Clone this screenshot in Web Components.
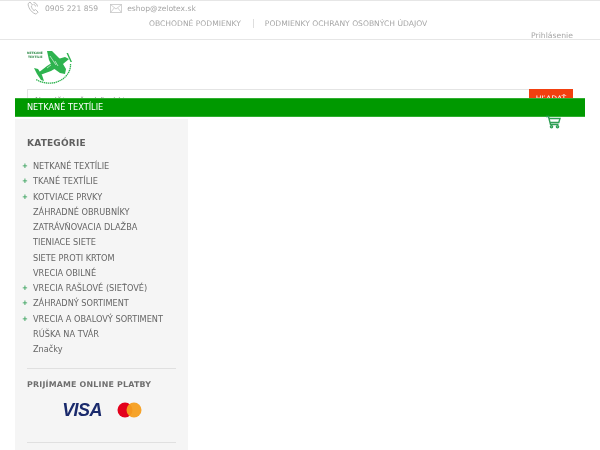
<!DOCTYPE html>
<html lang="sk">
<head>
<meta charset="utf-8">
<title>Zelotex</title>
<style>
  html, body { margin: 0; padding: 0; background: #fff; height: 450px; overflow: hidden; }
  body { font-family: "DejaVu Sans", sans-serif; filter: blur(.35px); }
</style>
</head>
<body>
<top-bar></top-bar>
<site-header></site-header>
<green-nav>NETKANÉ TEXTÍLIE</green-nav>
<page-main>
  <side-panel>
    <cat-menu></cat-menu>
    <pay-box></pay-box>
  </side-panel>
</page-main>

<script>
class TopBar extends HTMLElement {
  constructor() {
    super();
    this.attachShadow({ mode: "open" });
    this.shadowRoot.innerHTML = `
      <style>
        :host {
          display: block;
          box-sizing: content-box;
          height: 38px;
          border-top: 1px solid #e6e6e6;
          border-bottom: 1px solid #e6e6e6;
          color: #a6a6a6;
          font-size: 7.6px;
        }
        .contact {
          display: flex;
          align-items: center;
          height: 14px;
          padding-left: 27px;
        }
        .contact svg { display: block; flex: none; }
        .contact .txt { margin-left: 6px; }
        .contact .mail { margin-left: 12px; }
        .contact .mail + .txt { margin-left: 5px; }
        .links {
          display: flex;
          align-items: center;
          margin: 1px 0 0 149px;
          height: 14px;
        }
        .sep { width: 1px; height: 9px; background: #dedede; margin: 0 11px 0 12px; }
        .login { text-align: right; padding: 1px 27px 0 0; font-size: 7.7px; line-height: 10px; }
      </style>
      <div class="contact">
        <svg width="12" height="14" viewBox="0 0 12 14" fill="none" stroke="#b5b5b5" stroke-width=".9">
          <path d="M3 1 1.2 2.6C.8 5.6 3.6 11 8.3 12.9c.8.2 2-.6 2.8-1.8L8.6 8.6 7 9.6C5.6 8.6 4.6 6.8 4.3 5.2L5.5 4Z"/>
          <path d="M6.5 1.5c2.2.2 3.8 1.8 4 4M6.5 3.4c1.1.1 2 1 2.1 2.1"/>
        </svg>
        <span class="txt">0905 221 859</span>
        <svg class="mail" width="12" height="9" viewBox="0 0 12 9" fill="none" stroke="#c6c6c6" stroke-width=".8">
          <rect x=".5" y=".5" width="11" height="8"/>
          <path d="M.5.5 6 5l5.5-4.5M.5 8.5 4.4 3.8M11.5 8.5 7.6 3.8"/>
        </svg>
        <span class="txt">eshop@zelotex.sk</span>
      </div>
      <div class="links">
        <span>OBCHODNÉ PODMIENKY</span><span class="sep"></span><span>PODMIENKY OCHRANY OSOBNÝCH ÚDAJOV</span>
      </div>
      <div class="login">Prihlásenie</div>
    `;
  }
}

class SiteHeader extends HTMLElement {
  constructor() {
    super();
    this.attachShadow({ mode: "open" });
    this.shadowRoot.innerHTML = `
      <style>
        :host {
          display: block;
          padding: 9px 27px 0;
          height: 49px;
        }
        .logo { display: block; width: 46px; height: 40px; }
        .search { display: flex; height: 26px; }
        .input {
          flex: 1;
          box-sizing: border-box;
          border: 1px solid #e4e4e4;
          border-right: 0;
          color: #999;
          font-size: 8px;
          padding: 7px 7px 0;
          letter-spacing: 1px;
        }
        .btn {
          width: 44px;
          background: #f2400f;
          color: #fff;
          font-size: 7.6px;
          text-align: center;
          padding-top: 5px;
          box-sizing: border-box;
        }
      </style>
      <svg class="logo" viewBox="0 0 46 40">
        <g font-family="DejaVu Sans" font-size="3" font-weight="700" fill="#2c8a46">
          <text x="0" y="4.5">NETKANÉ</text>
          <text x="1" y="9">TEXTÍLIE</text>
        </g>
        <g fill="#2eb34f">
          <path d="M20 2 25 2 33 10 39 20 38 25 33 24 26 19 22 11Z"/>
          <path d="M38 8 42 10 36 15 24 22 13 26 11 24 20 17 31 10Z"/>
          <path d="M7 19 11 20 15 26 17 32 14 31 10 25Z"/>
          <path d="M39.500 4 41 4 45 13 43.500 13Z"/>
        </g>
        <path d="M23 7 29 16M28 12 31 17M20 19 24 16" stroke="#fff" stroke-width=".6" fill="none"/>
        <path d="M43.500 15C44 23 38 31 28 33.500 21 35 14 33.500 9 30.500" fill="none" stroke="#2eb34f" stroke-width="1.300" stroke-dasharray="1.400 .6"/>
      </svg>
      <div class="search">
        <div class="input">Napíšte, čo hľadáte</div>
        <div class="btn">HĽADAŤ</div>
      </div>
    `;
  }
}

class GreenNav extends HTMLElement {
  constructor() {
    super();
    this.attachShadow({ mode: "open" });
    this.shadowRoot.innerHTML = `
      <style>
        :host {
          display: block;
          position: absolute;
          top: 98px;
          left: 15px;
          width: 570px;
          height: 19px;
          box-sizing: border-box;
          background: #009900;
          border: 1px solid #2fae2f;
          border-width: 1px 0;
          color: #fff;
          font-size: 8.2px;
          line-height: 17px;
          padding-left: 12px;
        }
      </style>
      <slot></slot>
    `;
  }
}

class PageMain extends HTMLElement {
  constructor() {
    super();
    this.attachShadow({ mode: "open" });
    this.shadowRoot.innerHTML = `
      <style>
        :host {
          display: flex;
          justify-content: space-between;
          padding-left: 15px;
          height: 331px;
          margin-top: 21px;
        }
        .cart { position: absolute; left: 545px; top: 115px; }
      </style>
      <slot></slot>
      <svg class="cart" width="16" height="14" viewBox="0 0 16 14" fill="none" stroke="#2f9e55" stroke-width="1.400">
        <path d="M1 1.500h2.500l2 8h8M4 3.500h11l-1.200 4H5.300"/>
        <circle cx="6.500" cy="11.800" r="1.100"/><circle cx="12.500" cy="11.800" r="1.100"/>
      </svg>
    `;
  }
}

class SidePanel extends HTMLElement {
  constructor() {
    super();
    this.attachShadow({ mode: "open" });
    this.shadowRoot.innerHTML = `
      <style>
        :host {
          display: block;
          width: 173px;
          height: 331px;
          background: #f5f5f5;
          box-sizing: border-box;
          padding: 19px 12px 0;
        }
      </style>
      <slot></slot>
    `;
  }
}

class CatMenu extends HTMLElement {
  constructor() {
    super();
    this.attachShadow({ mode: "open" });
    const items = [
      ["NETKANÉ TEXTÍLIE", 1], ["TKANÉ TEXTÍLIE", 1], ["KOTVIACE PRVKY", 1],
      ["ZÁHRADNÉ OBRUBNÍKY", 0], ["ZATRÁVŇOVACIA DLAŽBA", 0], ["TIENIACE SIETE", 0],
      ["SIETE PROTI KRTOM", 0], ["VRECIA OBILNÉ", 0], ["VRECIA RAŠLOVÉ (SIEŤOVÉ)", 1],
      ["ZÁHRADNÝ SORTIMENT", 1], ["VRECIA A OBALOVÝ SORTIMENT", 1], ["RÚŠKA NA TVÁR", 0], ["Značky", 0]
    ];
    this.shadowRoot.innerHTML = `
      <style>
        :host { display: block; }
        h3 {
          margin: 0 0 10px;
          font-size: 9px;
          line-height: 11px;
          color: #5f5f5f;
          font-weight: 700;
          letter-spacing: .2px;
        }
        ul { list-style: none; margin: 0 0 0 -5px; padding: 0; }
        li {
          display: flex;
          height: 15.25px;
          line-height: 15px;
          font-size: 8.2px;
          color: #666;
        }
        b { width: 11px; flex: none; color: #2f9e55; font-weight: 700; font-size: 7px; }
        .rule { border-top: 1px solid #e0e0e0; margin-top: 11px; }
      </style>
      <h3>KATEGÓRIE</h3>
      <ul>${items.map(([t, plus]) => `<li><b>${plus ? "+" : ""}</b><span>${t}</span></li>`).join("")}</ul>
      <div class="rule"></div>
    `;
  }
}

class PayBox extends HTMLElement {
  constructor() {
    super();
    this.attachShadow({ mode: "open" });
    this.shadowRoot.innerHTML = `
      <style>
        :host { display: block; }
        h3 {
          margin: 10px 0 0;
          font-size: 7.9px;
          line-height: 11px;
          color: #6e6e6e;
          font-weight: 700;
          letter-spacing: .2px;
        }
        .logos {
          display: flex;
          align-items: center;
          justify-content: center;
          gap: 15px;
          margin-top: 12px;
          height: 16px;
        }
        .visa {
          font: italic 700 18px "Liberation Sans", sans-serif;
          color: #1a2a6c;
          letter-spacing: -.6px;
          margin-left: 1px;
        }
        svg { margin-top: -1px; }
        .rule { border-top: 1px solid #e0e0e0; margin-top: 24px; }
      </style>
      <h3>PRIJÍMAME ONLINE PLATBY</h3>
      <div class="logos">
        <span class="visa">VISA</span>
        <svg width="25" height="16" viewBox="0 0 25 16">
          <circle cx="8" cy="8" r="7.500" fill="#e3001b"/>
          <circle cx="17" cy="8" r="7.500" fill="#f59e1e" fill-opacity=".95"/>
        </svg>
      </div>
      <div class="rule"></div>
    `;
  }
}

customElements.define("top-bar", TopBar);
customElements.define("site-header", SiteHeader);
customElements.define("green-nav", GreenNav);
customElements.define("page-main", PageMain);
customElements.define("side-panel", SidePanel);
customElements.define("cat-menu", CatMenu);
customElements.define("pay-box", PayBox);
</script>
</body>
</html>
